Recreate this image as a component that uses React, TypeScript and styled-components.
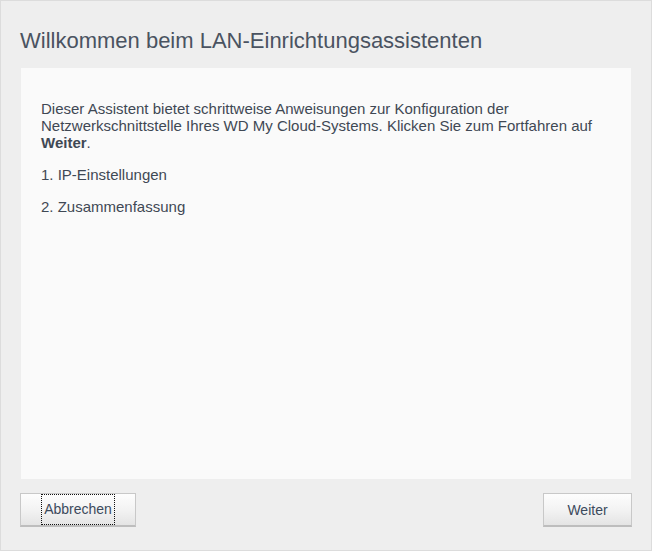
import React from "react";
import styled, { createGlobalStyle } from "styled-components";

const Global = createGlobalStyle`
  html, body { margin: 0; padding: 0; background: #efefef; }
  * { box-sizing: border-box; }
`;

const Dialog = styled.div`
  width: 652px;
  height: 551px;
  background: #eeeeee;
  border: 1px solid #dcdcdc;
  display: flex;
  flex-direction: column;
  font-family: "Liberation Sans", Arial, sans-serif;
`;

const Title = styled.h1`
  margin: 27px 0 0 19px;
  font-size: 22px;
  font-weight: normal;
  line-height: 25px;
  color: #4a5361;
`;

const Panel = styled.div`
  margin: 15px 20px 0 20px;
  height: 411px;
  background: #fafafa;
  padding: 32px 20px 0 20px;
  color: #3f4854;
  font-size: 15px;
  line-height: 17px;
`;

const Para = styled.p`
  margin: 0 0 15px 0;
`;

const Footer = styled.div`
  display: flex;
  justify-content: space-between;
  padding: 14px 19px 0 19px;
`;

const Button = styled.button<{ $w: number }>`
  width: ${(p) => p.$w}px;
  height: 34px;
  padding: 0;
  border: 1px solid #c8c8c8;
  border-bottom: 2px solid #bdbdbd;
  background: linear-gradient(to bottom, #fdfdfd 0%, #f3f3f3 50%, #e4e4e4 100%);
  font-family: "Liberation Sans", Arial, sans-serif;
  font-size: 14px;
  color: #3c4a5c;
  display: flex;
  align-items: center;
  justify-content: center;
  cursor: pointer;
`;

const Focus = styled.span`
  outline: 1px dotted #111;
  padding: 6px 2px 6px 2px;
  line-height: 17px;
`;

export default function App() {
  return (
    <>
      <Global />
      <Dialog>
        <Title>Willkommen beim LAN-Einrichtungsassistenten</Title>
        <Panel>
          <Para>
            Dieser Assistent bietet schrittweise Anweisungen zur Konfiguration der
            Netzwerkschnittstelle Ihres WD My Cloud-Systems. Klicken Sie zum Fortfahren auf{" "}
            <b>Weiter</b>.
          </Para>
          <Para>1. IP-Einstellungen</Para>
          <Para>2. Zusammenfassung</Para>
        </Panel>
        <Footer>
          <Button $w={116}>
            <Focus>Abbrechen</Focus>
          </Button>
          <Button $w={89}>Weiter</Button>
        </Footer>
      </Dialog>
    </>
  );
}
